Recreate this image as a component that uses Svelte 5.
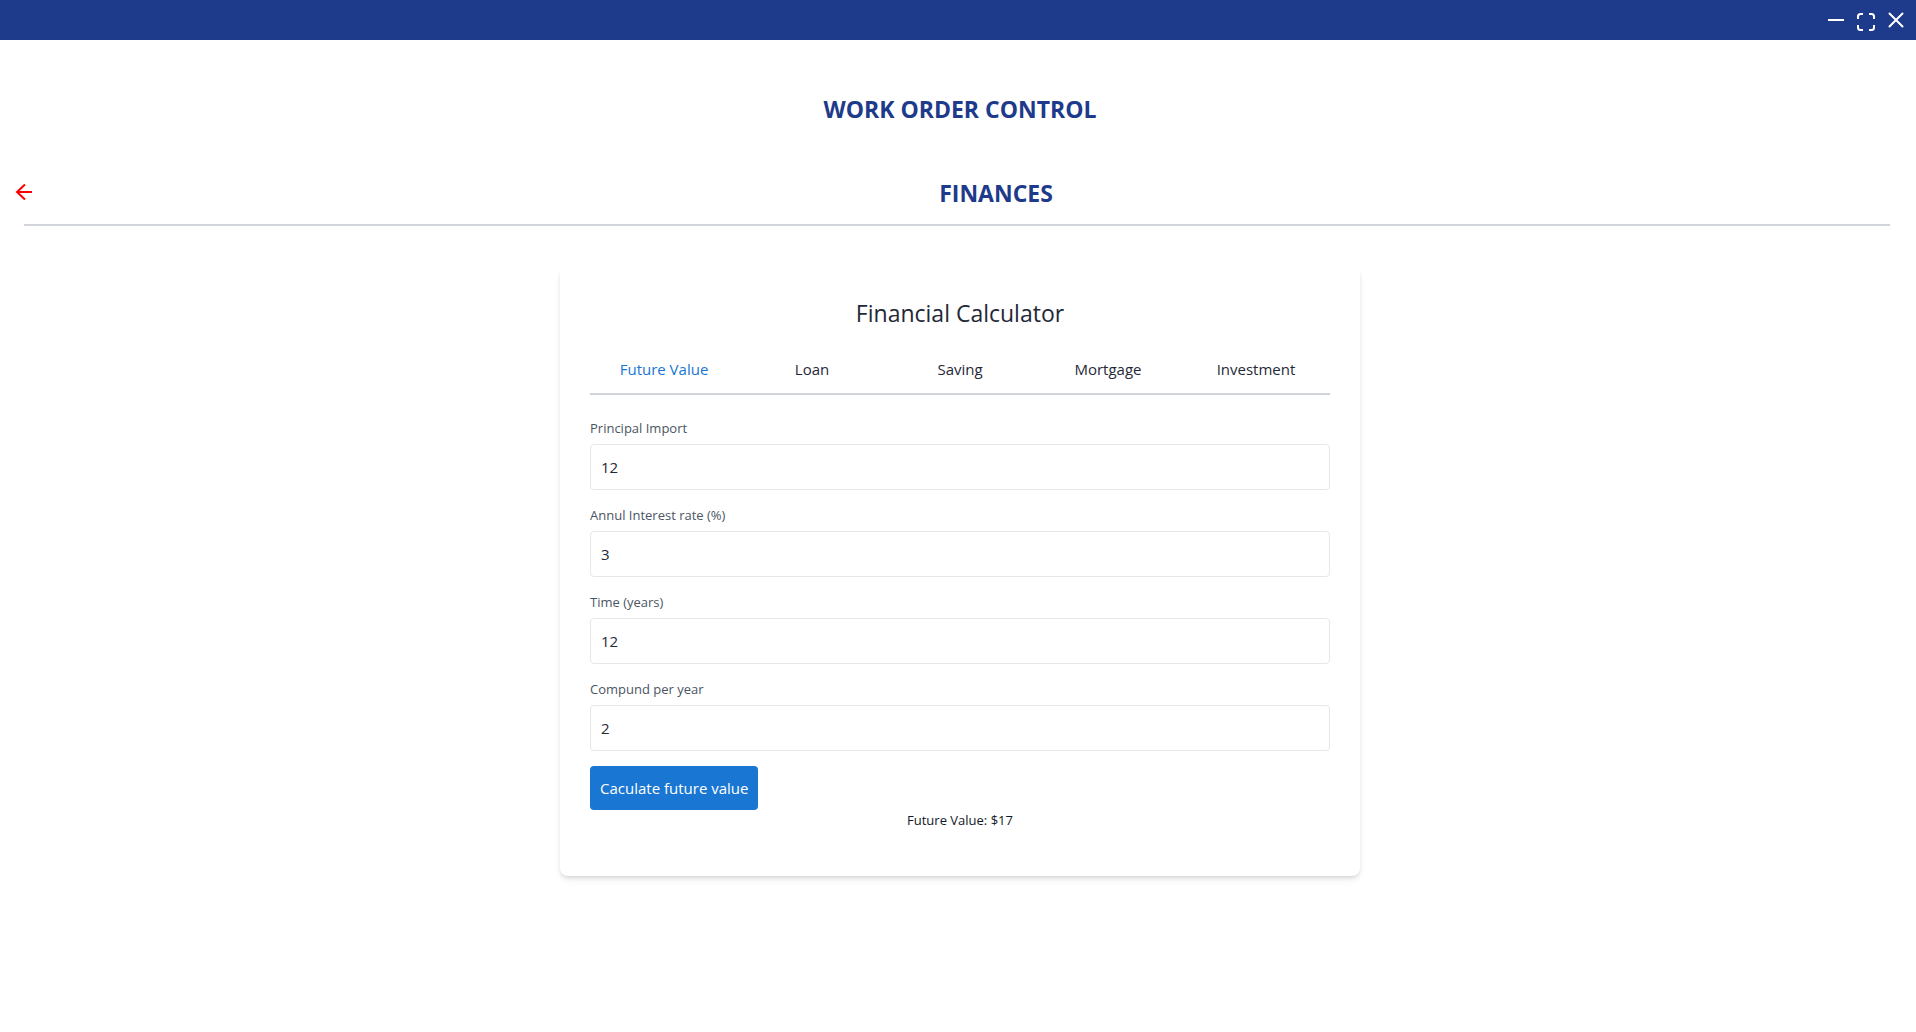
<script>
  const tabs = ['Future Value', 'Loan', 'Saving', 'Mortgage', 'Investment'];
  let active = $state('Future Value');
  let fields = $state([
    { id: 'principal', label: 'Principal Import', value: '12' },
    { id: 'rate', label: 'Annul Interest rate (%)', value: '3' },
    { id: 'time', label: 'Time (years)', value: '12' },
    { id: 'compound', label: 'Compund per year', value: '2' }
  ]);
  let result = $state(17);

  function calculate(event) {
    event.preventDefault();
    const [principal, rate, years, periods] = fields.map((f) => Number(f.value));
    result = Math.round(principal * (1 + rate / 100 / periods) ** (periods * years));
  }
</script>

<header class="titlebar">
  <button type="button" aria-label="Minimize">
    <svg viewBox="0 0 20 20"><path d="M2 10h16" stroke-width="2" /></svg>
  </button>
  <button type="button" class="maximize" aria-label="Maximize">
    <svg viewBox="0 0 20 20"><path d="M2 7V4.500Q2 2 4.500 2H7M13 2h2.500Q18 2 18 4.500V7M18 13v2.500Q18 18 15.500 18H13M7 18H4.500Q2 18 2 15.500V13" /></svg>
  </button>
  <button type="button" aria-label="Close">
    <svg viewBox="0 0 20 20"><path d="M3.500 3.500l13 13M16.500 3.500l-13 13" stroke-linecap="round" /></svg>
  </button>
</header>

<main>
  <h1>WORK ORDER CONTROL</h1>
  <div class="section">
    <button type="button" class="back" aria-label="Back">
      <svg viewBox="0 0 24 24"><path d="M20 12H5M13 4.500L5 12l8 7.500" /></svg>
    </button>
    <h2>FINANCES</h2>
  </div>
  <hr />

  <div class="content">
    <div class="card">
      <h3>Financial Calculator</h3>
      <nav>
        {#each tabs as tab}
          <button type="button" class:active={active === tab} onclick={() => (active = tab)}>{tab}</button>
        {/each}
      </nav>
      <form onsubmit={calculate}>
        {#each fields as field}
          <div class="field">
            <label for={field.id}>{field.label}</label>
            <input id={field.id} type="text" inputmode="decimal" bind:value={field.value} />
          </div>
        {/each}
        <button type="submit" class="submit">Caculate future value</button>
      </form>
      <p>Future Value: ${result}</p>
    </div>
  </div>
</main>

<style>
  :global(body) {
    margin: 0;
    background: #fff;
    color: #1f2937;
    font: 16px/24px 'Segoe UI', 'Open Sans', 'Noto Sans', sans-serif;
  }
  button {
    border: 0;
    padding: 0;
    background: none;
    color: inherit;
    font: inherit;
    cursor: pointer;
  }
  svg {
    display: block;
    fill: none;
    stroke: currentColor;
    stroke-width: 2;
  }
  h1, h2, h3, p {
    margin: 0;
    text-align: center;
  }
  .titlebar {
    display: flex;
    align-items: center;
    justify-content: flex-end;
    gap: 10px;
    height: 40px;
    padding-right: 10px;
    background: #1e3a8a;
    color: #fff;
  }
  .titlebar svg {
    width: 20px;
    height: 20px;
  }
  .titlebar .maximize {
    padding-top: 4px;
  }
  h1, h2 {
    color: #1e3a8a;
    font-size: 23px;
    line-height: 32px;
    font-weight: 700;
  }
  h1 {
    padding: 53px 0 52px 4px;
  }
  .section {
    display: flex;
    align-items: center;
  }
  .back {
    width: 64px;
    padding: 0 0 2px 12px;
    margin-right: 12px;
    color: #f00;
  }
  .back svg {
    width: 24px;
    height: 24px;
  }
  h2 {
    flex: 1;
  }
  hr {
    height: 2px;
    margin: 15px 26px 41px 24px;
    border: 0;
    background: #d1d5db;
  }
  .content {
    padding: 0 0 24px 4px;
  }
  .card {
    box-sizing: border-box;
    max-width: 800px;
    margin: 0 auto;
    padding: 30px 30px 45px;
    border-radius: 8px;
    background: #fff;
    box-shadow: 0 4px 6px -1px rgb(0 0 0 / 0.1), 0 2px 4px -1px rgb(0 0 0 / 0.1);
  }
  h3 {
    font-size: 23px;
    line-height: 32px;
    font-weight: 400;
  }
  nav {
    display: grid;
    grid-template-columns: repeat(5, 1fr);
    margin-top: 28px;
    padding-bottom: 12px;
    border-bottom: 2px solid #d1d5db;
  }
  nav button {
    font-size: 15px;
  }
  nav .active {
    color: #1976d2;
  }
  form {
    padding-top: 23px;
  }
  .field {
    margin-bottom: 15px;
  }
  label {
    display: block;
    margin-bottom: 5px;
    color: #4b5563;
    font-size: 13px;
    line-height: 21px;
  }
  input {
    display: block;
    box-sizing: border-box;
    width: 100%;
    height: 46px;
    padding: 0 10px;
    border: 1px solid #e5e7eb;
    border-radius: 4px;
    background: #fff;
    color: #1f2937;
    font: inherit;
    font-size: 15px;
  }
  .submit {
    display: block;
    padding: 10px;
    border-radius: 4px;
    background: #1976d2;
    color: #fff;
    font-size: 15px;
  }
  p {
    color: #111827;
    font-size: 13px;
    line-height: 21px;
  }
</style>
